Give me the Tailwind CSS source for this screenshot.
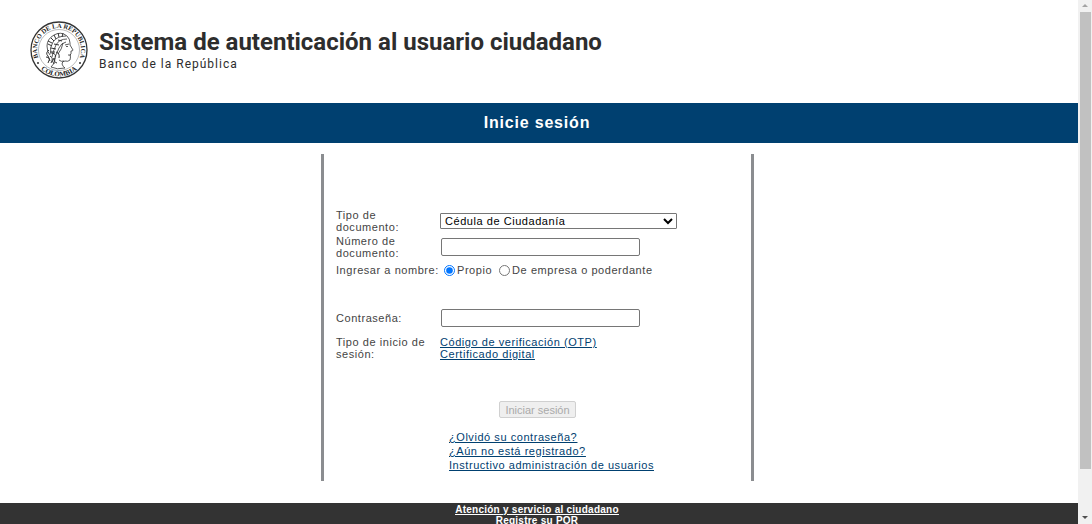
<!DOCTYPE html>
<html lang="es">

<head>
    <meta charset="UTF-8" />
    <meta name="viewport" content="width=device-width, initial-scale=1.0" />
    <title>Sistema de autenticación al usuario ciudadano</title>
    <script src="https://cdn.jsdelivr.net/npm/@tailwindcss/browser@4"></script>
</head>

<body class="flex h-screen overflow-hidden bg-white font-['Liberation_Sans',Arial,sans-serif] text-[#444]">

    <div class="flex-1 min-w-0 overflow-hidden">
        <!-- Encabezado -->
        <header class="flex items-start px-[30px] pt-[21px] pb-6 text-[#2d2d2d]">
            <svg class="w-[58px] h-[58px] shrink-0" viewBox="0 0 58 58" fill="none" stroke="#333" role="img" aria-label="Banco de la República Colombia">
                <defs>
                    <path id="arco-arriba" d="M10 40A22 22 0 1 1 48 40" />
                    <path id="arco-abajo" d="M6 42A26.500 26.500 0 0 0 52 42" />
                </defs>
                <circle cx="29" cy="29" r="28" stroke-width="1.300" />
                <circle cx="29" cy="29" r="20.500" stroke-width=".5" stroke="#777" />
                <g fill="#222" stroke="none" font-family="Liberation Serif" font-size="6.500" font-weight="bold">
                    <text><textPath href="#arco-arriba" startOffset="50%" text-anchor="middle">BANCO DE LA REPUBLICA</textPath></text>
                    <text font-size="7"><textPath href="#arco-abajo" startOffset="50%" text-anchor="middle">COLOMBIA</textPath></text>
                </g>
                <circle cx="8" cy="42" r="1" fill="#333" stroke="none" />
                <circle cx="50" cy="42" r="1" fill="#333" stroke="none" />
                <!-- Perfil -->
                <path d="M37 15q3 3 3 7l0 2 3 5q0 1-2 1l0 3-1 1 .5 2-.5 3q-2 2-5 1-3 0-3 3 1 3 3 4M25 37q1 5-4 9M21 46q6 3 14 1M29 39q2 2 5 1" stroke-width=".8" />
                <path d="M35 24l4-1M36 25.500l2 0M38 34l3 0" stroke-width=".8" />
                <!-- Cabello y corona -->
                <path d="M37 15q-6-5-13-1-7 4-7 11 0 6 3 9M36 15q-9 0-13 6t-2 12M37 18q-8 0-11 6t-4 12M36 21q-5 1-7 6t-4 9M33 22q-1 6-5 11" stroke-width=".8" />
                <path d="M18 23l4 2M18 20l4 2M21 17l3 3M24 14l2 4M28 12l1 4M33 12l-1 4M21 27l5 1M20 31l5 0M24 23l5 1M28 19l4 1" stroke-width="1" />
                <path d="M19 29q-4 3-1 6t0 7M22 32q5 1 3 5t2 5M20 35q4 2 1 7M26 31q4 1 3 6M16 36q3-1 4 4M24 37q-3 3 0 6" stroke-width="1" />
            </svg>
            <div class="pl-[11px] pt-[5px] font-[Roboto,sans-serif] whitespace-nowrap">
                <h1 class="text-[24px] leading-8 font-bold">Sistema de autenticación al usuario ciudadano</h1>
                <p class="text-xs leading-3 tracking-[1px]">Banco de la República</p>
            </div>
        </header>

        <h2 class="bg-[#004070] pr-1 text-white text-base leading-10 font-bold tracking-wider text-center">Inicie sesión</h2>

        <!-- Formulario -->
        <main class="pt-[11px] pb-[22px] pr-[3px]">
            <form class="w-[433px] mx-auto border-x-3 border-[#8b8d90] px-3 pt-[55px] pb-[9px] text-[11px] leading-3 tracking-wider">
                <div class="grid grid-cols-[104px_1fr] items-center gap-y-[2px]">
                    <label for="tipo" class="pr-4">Tipo de documento:</label>
                    <select id="tipo" class="w-[237px] h-4 border border-[#767676] rounded-[1px] bg-white text-black tracking-wider">
                        <option>Cédula de Ciudadanía</option>
                    </select>

                    <label for="numero" class="pr-4">Número de documento:</label>
                    <input id="numero" type="text" class="w-[199px] h-[18px] ml-px px-1 border border-[#767676] rounded-[2px]" />

                    <span id="nombre" class="whitespace-nowrap">Ingresar a nombre:</span>
                    <div class="flex items-center h-[18px] pl-1 whitespace-nowrap" role="radiogroup" aria-labelledby="nombre">
                        <input id="propio" type="radio" name="nombre" class="w-[11px] h-[11px] m-0" checked />
                        <label for="propio" class="pl-[2px] pr-[7px]">Propio</label>
                        <input id="empresa" type="radio" name="nombre" class="w-[11px] h-[11px] m-0" />
                        <label for="empresa" class="pl-[2px]">De empresa o poderdante</label>
                    </div>

                    <label for="clave" class="mt-7">Contraseña:</label>
                    <input id="clave" type="password" class="w-[199px] h-[18px] mt-7 ml-px px-1 border border-[#767676] rounded-[2px]" />

                    <span class="mt-[7px]">Tipo de inicio de sesión:</span>
                    <div class="mt-[7px] flex flex-col items-start text-[#004070] underline">
                        <a href="#">Código de verificación (OTP)</a>
                        <a href="#">Certificado digital</a>
                    </div>
                </div>

                <div class="mt-[41px] text-center">
                    <button type="submit" disabled class="block mx-auto h-[17px] px-[5px] border border-[#d0d0d0] rounded-[2px] bg-[#efefef] text-[#aaa] leading-3 tracking-normal">Iniciar sesión</button>
                </div>

                <div class="mt-3 ml-[113px] flex flex-col items-start leading-[14px] text-[#004070] underline">
                    <a href="#">¿Olvidó su contraseña?</a>
                    <a href="#">¿Aún no está registrado?</a>
                    <a href="#">Instructivo administración de usuarios</a>
                </div>
            </form>
        </main>

        <footer class="flex flex-col items-center bg-[#333] pt-px pr-1 pb-6 text-[10px] leading-[11px] font-bold tracking-wide text-white underline">
            <a href="#">Atención y servicio al ciudadano</a>
            <a href="#">Registre su PQR</a>
        </footer>
    </div>

    <!-- Barra de desplazamiento -->
    <div class="w-[14px] shrink-0 flex flex-col items-center bg-[#f1f1f1]" aria-hidden="true">
        <svg class="w-[14px] h-3" viewBox="0 0 14 12" fill="#a3a3a3"><path d="M4 7L7 4l3 3z" /></svg>
        <div class="w-[11px] h-[457px] bg-[#c1c1c1]"></div>
        <svg class="w-[14px] h-3 mt-auto" viewBox="0 0 14 12" fill="#505050"><path d="M4 4l3 3 3-3z" /></svg>
    </div>

</body>

</html>
